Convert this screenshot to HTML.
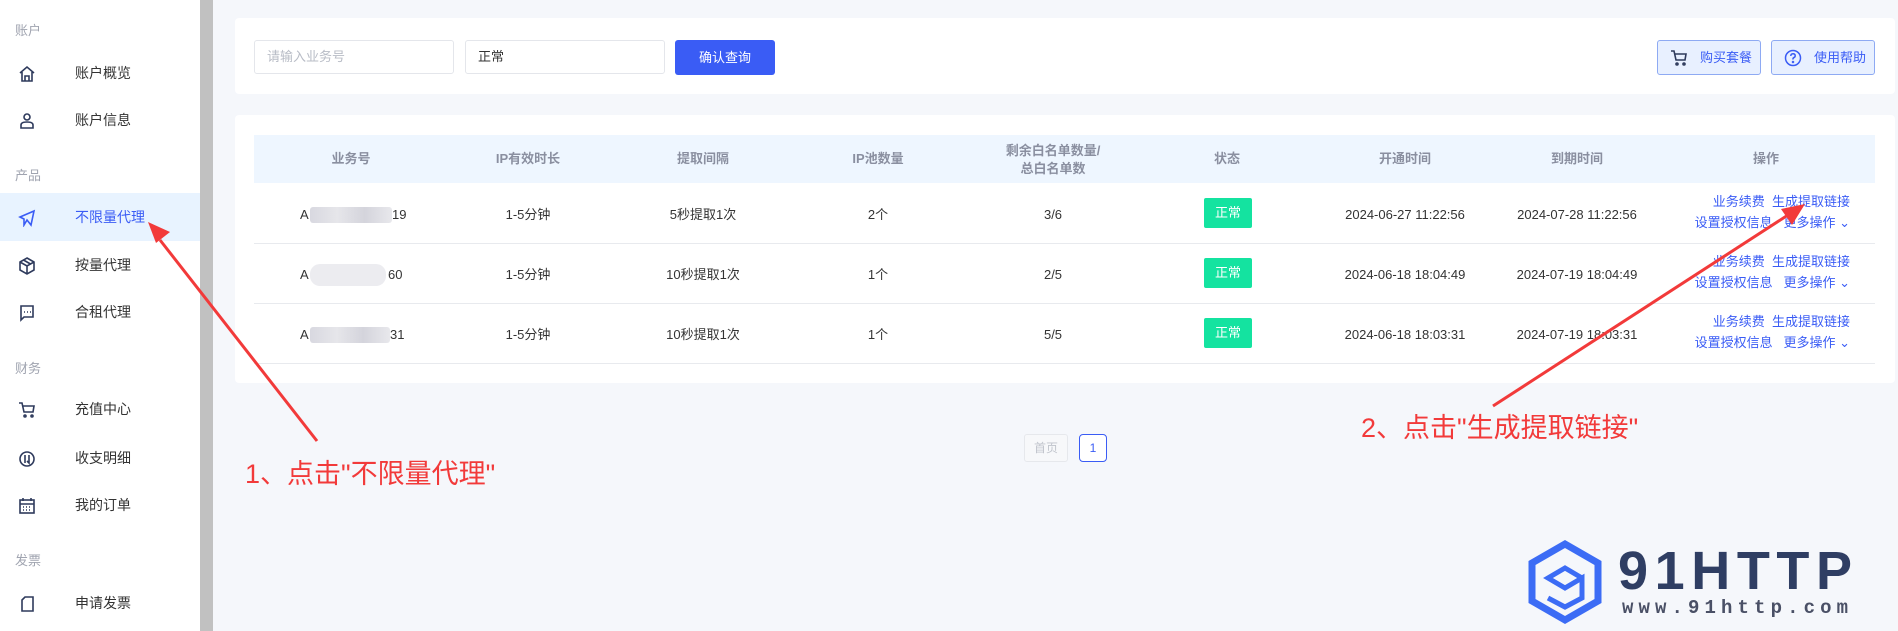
<!DOCTYPE html>
<html><head><meta charset="utf-8"><style>
*{margin:0;padding:0;box-sizing:border-box}
body{width:1898px;height:631px;overflow:hidden;background:#f5f7fb;font-family:"Liberation Sans","Noto Sans CJK SC",sans-serif;position:relative;color:#333}
.side{position:absolute;left:0;top:0;width:200px;height:631px;background:#fff}
.bar{position:absolute;left:200px;top:0;width:13px;height:631px;background:#c1c1c1}
.sec{position:absolute;left:15px;font-size:13px;color:#a0a4b0}
.it{position:absolute;left:0;width:200px;height:48px;line-height:48px;font-size:14px;color:#333;padding-left:75px}
.it svg{position:absolute;left:18px;top:16px}
.act{background:#e8f3ff;color:#3a5cf5}
.card{position:absolute;background:#fff;border-radius:4px}
.inp{position:absolute;top:40px;height:34px;border:1px solid #e4e6eb;border-radius:3px;font-size:13px;line-height:32px;padding-left:12px}
.btn{position:absolute;top:40px;height:35px;background:#3a5cf5;color:#fff;border-radius:3px;font-size:13px;line-height:35px;text-align:center}
.obtn{position:absolute;top:40px;height:35px;background:#e8f0ff;border:1px solid #8eaaf3;color:#3a5cf5;border-radius:3px;font-size:13px;line-height:33px;padding-left:42px}
.obtn svg{position:absolute;left:12px;top:8px}
.hd{position:absolute;left:254px;top:135px;width:1621px;height:48px;background:#eef6ff}
.c{position:absolute;text-align:center;font-size:13px;line-height:16px;transform:translateX(-50%);white-space:nowrap}
.t{position:absolute;font-size:13px;line-height:16px}
.h{color:#8a8fa0;font-weight:bold}
.line{position:absolute;left:254px;width:1621px;height:1px;background:#e8eaee}
.badge{position:absolute;left:1204px;width:48px;height:30px;background:#14e3a0;color:#fff;font-size:13px;line-height:30px;text-align:center;border-radius:2px}
.lk{position:absolute;right:48px;font-size:13px;line-height:16px;color:#3a5cf5;text-align:right;white-space:nowrap}
.blur{position:absolute;height:16px;background:linear-gradient(90deg,#d8d8e0,#e6e6ea,#d4d4dc,#e8e8ec);border-radius:3px}
.ann{position:absolute;color:#f23a3a;font-size:27px;white-space:nowrap}
</style></head><body>
<div class="side">
<div class="sec" style="top:20px">账户</div>
<div class="it" style="top:49px"><svg width="18" height="18" viewBox="0 0 18 18" fill="none" stroke="#2e3a5c" stroke-width="1.6"><path d="M2 8 9 2l7 6M4 7v9h10V7M7 16v-5h4v5"/></svg>账户概览</div>
<div class="it" style="top:96px"><svg width="18" height="18" viewBox="0 0 18 18" fill="none" stroke="#2e3a5c" stroke-width="1.6"><circle cx="9" cy="5" r="3"/><path d="M3 16v-3q0-3 6-3t6 3v3z"/></svg>账户信息</div>
<div class="sec" style="top:165px">产品</div>
<div class="it act" style="top:193px"><svg width="18" height="18" viewBox="0 0 18 18" fill="none" stroke="#3a5cf5" stroke-width="1.6"><path d="M2 8 16 2l-3 14-4-5-3 5V10z"/></svg>不限量代理</div>
<div class="it" style="top:241px"><svg width="18" height="18" viewBox="0 0 18 18" fill="none" stroke="#2e3a5c" stroke-width="1.6"><path d="M9 1 16 5v8l-7 4-7-4V5zM2 5l7 4 7-4M9 9v8M5.5 3l7 4"/></svg>按量代理</div>
<div class="it" style="top:288px"><svg width="18" height="18" viewBox="0 0 18 18" fill="none" stroke="#2e3a5c" stroke-width="1.6"><path d="M3 2h12v11H6l-3 3z"/><path d="M6 8h1M9 8h1M12 8h1"/></svg>合租代理</div>
<div class="sec" style="top:358px">财务</div>
<div class="it" style="top:385px"><svg width="18" height="18" viewBox="0 0 18 18" fill="none" stroke="#2e3a5c" stroke-width="1.6"><path d="M1 2h3l2 9h9l1-6H5"/><circle cx="7" cy="15" r="1"/><circle cx="14" cy="15" r="1"/></svg>充值中心</div>
<div class="it" style="top:434px"><svg width="18" height="18" viewBox="0 0 18 18" fill="none" stroke="#2e3a5c" stroke-width="1.6"><circle cx="9" cy="9" r="7"/><path d="M7 5v8M11 5v8l-2-2"/></svg>收支明细</div>
<div class="it" style="top:481px"><svg width="18" height="18" viewBox="0 0 18 18" fill="none" stroke="#2e3a5c" stroke-width="1.6"><rect x="2" y="3" width="14" height="13"/><path d="M2 7h14M5 1v3M13 1v3M5 10h1M8 10h1M11 10h1M5 13h1M8 13h1M11 13h1"/></svg>我的订单</div>
<div class="sec" style="top:550px">发票</div>
<div class="it" style="top:579px"><svg width="18" height="18" viewBox="0 0 18 18" fill="none" stroke="#2e3a5c" stroke-width="1.6"><path d="M7 2h8v14H4V5z"/></svg>申请发票</div>
</div>
<div class="bar"></div>

<div class="card" style="left:235px;top:18px;width:1660px;height:76px"></div>
<div class="inp" style="left:254px;width:200px;color:#b8bcc6">请输入业务号</div>
<div class="inp" style="left:465px;width:200px;color:#333">正常</div>
<div class="btn" style="left:675px;width:100px">确认查询</div>
<div class="obtn" style="left:1657px;width:104px"><svg width="18" height="18" viewBox="0 0 18 18" fill="none" stroke="#2e3a5c" stroke-width="1.6"><path d="M1 2h3l2 9h9l1-6H5"/><circle cx="7" cy="15" r="1"/><circle cx="14" cy="15" r="1"/></svg>购买套餐</div>
<div class="obtn" style="left:1771px;width:104px"><svg width="18" height="18" viewBox="0 0 18 18" fill="none" stroke="#3a5cf5" stroke-width="1.5"><circle cx="9" cy="9" r="7.5"/><path d="M6.8 7q0-2.3 2.2-2.3t2.2 2q0 1.3-1.2 1.8T9 10.5"/><circle cx="9" cy="13" r=".5"/></svg>使用帮助</div>

<div class="card" style="left:235px;top:115px;width:1660px;height:268px"></div>
<div class="hd"></div>
<div class="c h" style="left:351px;top:151px">业务号</div>
<div class="c h" style="left:528px;top:151px">IP有效时长</div>
<div class="c h" style="left:703px;top:151px">提取间隔</div>
<div class="c h" style="left:878px;top:151px">IP池数量</div>
<div class="c h" style="left:1053px;top:142px;line-height:18px">剩余白名单数量/<br>总白名单数</div>
<div class="c h" style="left:1227px;top:151px">状态</div>
<div class="c h" style="left:1405px;top:151px">开通时间</div>
<div class="c h" style="left:1577px;top:151px">到期时间</div>
<div class="c h" style="left:1766px;top:151px">操作</div>

<div class="line" style="top:243px"></div><div class="line" style="top:303px"></div><div class="line" style="top:363px"></div>

<div class="t" style="left:300px;top:207px">A</div><div class="blur" style="left:310px;top:207px;width:82px"></div><div class="t" style="left:392px;top:207px">19</div>
<div class="t" style="left:300px;top:267px">A</div><div class="blur" style="left:310px;top:264px;width:76px;height:22px;border-radius:10px;background:#ececf0"></div><div class="t" style="left:388px;top:267px">60</div>
<div class="t" style="left:300px;top:327px">A</div><div class="blur" style="left:310px;top:327px;width:80px"></div><div class="t" style="left:390px;top:327px">31</div>

<div class="c" style="left:528px;top:207px">1-5分钟</div><div class="c" style="left:528px;top:267px">1-5分钟</div><div class="c" style="left:528px;top:327px">1-5分钟</div>
<div class="c" style="left:703px;top:207px">5秒提取1次</div><div class="c" style="left:703px;top:267px">10秒提取1次</div><div class="c" style="left:703px;top:327px">10秒提取1次</div>
<div class="c" style="left:878px;top:207px">2个</div><div class="c" style="left:878px;top:267px">1个</div><div class="c" style="left:878px;top:327px">1个</div>
<div class="c" style="left:1053px;top:207px">3/6</div><div class="c" style="left:1053px;top:267px">2/5</div><div class="c" style="left:1053px;top:327px">5/5</div>
<div class="badge" style="top:198px">正常</div><div class="badge" style="top:258px">正常</div><div class="badge" style="top:318px">正常</div>
<div class="c" style="left:1405px;top:207px">2024-06-27 11:22:56</div><div class="c" style="left:1405px;top:267px">2024-06-18 18:04:49</div><div class="c" style="left:1405px;top:327px">2024-06-18 18:03:31</div>
<div class="c" style="left:1577px;top:207px">2024-07-28 11:22:56</div><div class="c" style="left:1577px;top:267px">2024-07-19 18:04:49</div><div class="c" style="left:1577px;top:327px">2024-07-19 18:03:31</div>

<div class="lk" style="top:194px">业务续费&nbsp;&nbsp;生成提取链接</div><div class="lk" style="top:215px">设置授权信息&nbsp;&nbsp;&nbsp;更多操作 ⌄</div>
<div class="lk" style="top:254px">业务续费&nbsp;&nbsp;生成提取链接</div><div class="lk" style="top:275px">设置授权信息&nbsp;&nbsp;&nbsp;更多操作 ⌄</div>
<div class="lk" style="top:314px">业务续费&nbsp;&nbsp;生成提取链接</div><div class="lk" style="top:335px">设置授权信息&nbsp;&nbsp;&nbsp;更多操作 ⌄</div>

<div style="position:absolute;left:1024px;top:434px;width:44px;height:28px;border:1px solid #e6e8ec;border-radius:3px;background:#f7f8fa;color:#c0c4cc;font-size:12px;line-height:26px;text-align:center">首页</div>
<div style="position:absolute;left:1079px;top:434px;width:28px;height:28px;border:1px solid #3a5cf5;border-radius:4px;background:#fff;color:#3a5cf5;font-size:12px;line-height:26px;text-align:center">1</div>

<div class="ann" style="left:245px;top:452px">1、点击"不限量代理"</div>
<div class="ann" style="left:1361px;top:406px">2、点击"生成提取链接"</div>

<svg width="1898" height="631" style="position:absolute;left:0;top:0">
<line x1="317" y1="441" x2="160" y2="240" stroke="#f23a3a" stroke-width="3"/>
<polygon points="148,222 170,232 156,243" fill="#f23a3a"/>
<line x1="1493" y1="406" x2="1788" y2="215" stroke="#f23a3a" stroke-width="3"/>
<polygon points="1805,204 1792,225 1781,209" fill="#f23a3a"/>
<g fill="none" stroke="#3c6cf5" stroke-width="7">
<polygon points="1565,544 1598,563 1598,601 1565,620 1532,601 1532,563"/>
</g>
<g fill="none" stroke="#3c6cf5" stroke-width="5">
<path d="M1582,578 L1565,568 L1548,578 L1565,588 L1582,578 L1582,598 L1565,607 L1548,598"/>
</g>
<text x="1618" y="589" font-family="Liberation Sans,sans-serif" font-weight="bold" font-size="54" fill="#2f3e63" textLength="234">91HTTP</text>
<text x="1622" y="613" font-family="Liberation Mono,monospace" font-weight="bold" font-size="19" fill="#4a5066" textLength="226">www.91http.com</text>
</svg>
</body></html>
